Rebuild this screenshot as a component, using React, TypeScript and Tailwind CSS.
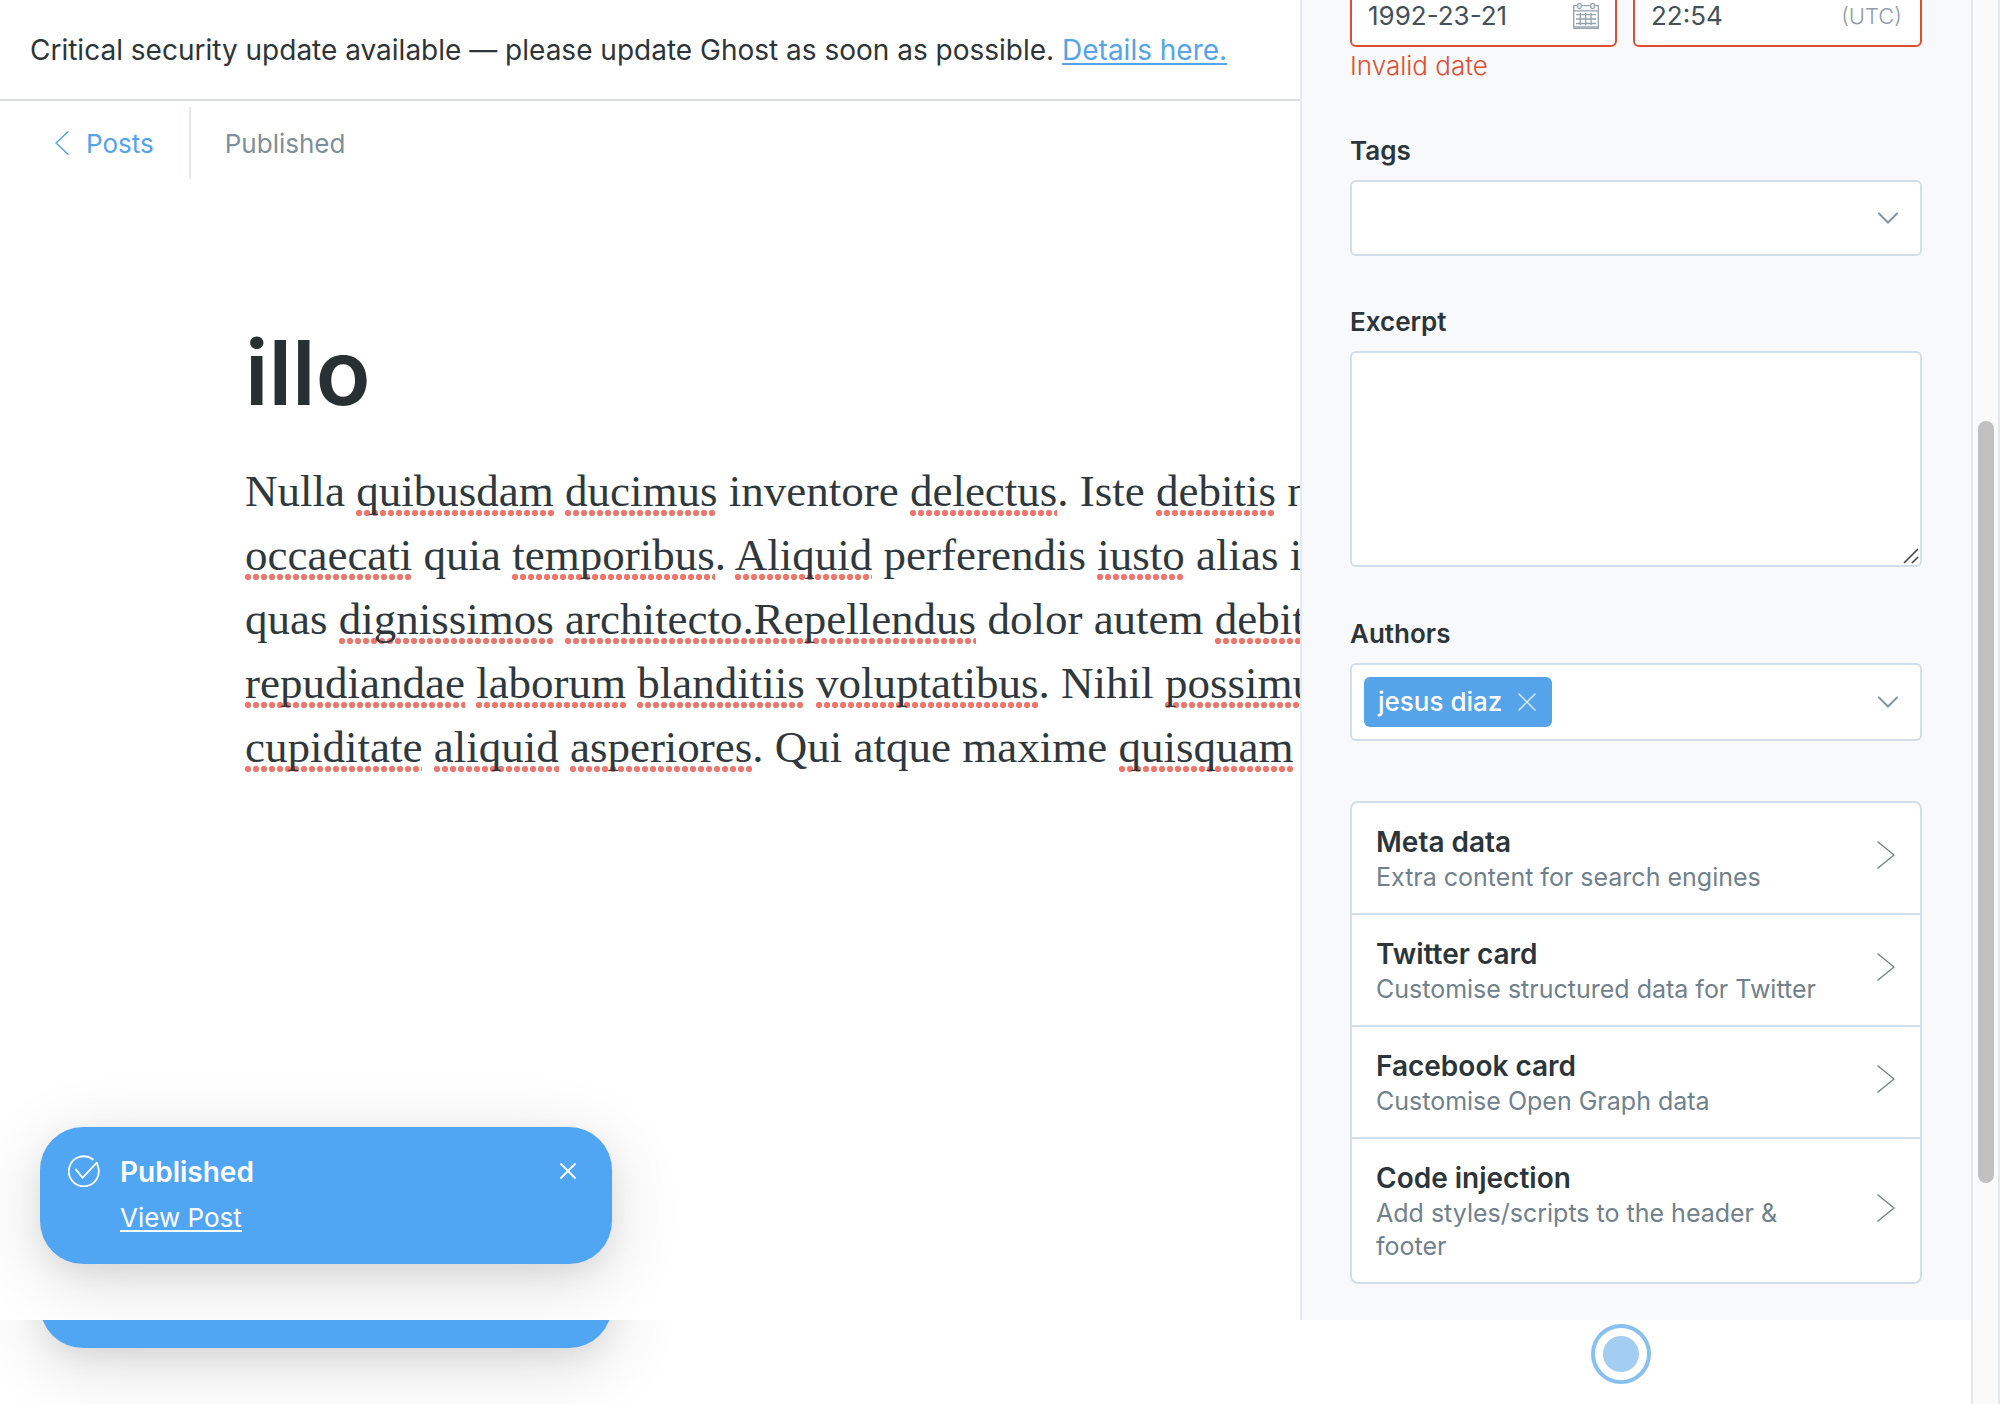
import type { ReactNode } from "react";

function Typo({ children }: { children: ReactNode }) {
  return (
    <span className="bg-[radial-gradient(circle_at_3px_3px,#f0756b_2.8px,transparent_3.4px)] bg-[length:8px_6px] bg-[position:left_bottom] bg-repeat-x">
      {children}
    </span>
  );
}

function ChevronDown() {
  return (
    <svg className="h-3 w-5" viewBox="0 0 20 12" fill="none" stroke="#8195a3" strokeWidth="2" strokeLinecap="round" aria-hidden="true">
      <path d="M1 1.500l9 9 9-9" />
    </svg>
  );
}

function CalendarIcon() {
  return (
    <svg className="h-[26px] w-[26px]" viewBox="0 0 26 26" fill="none" stroke="#93a4af" strokeWidth="1.3" aria-hidden="true">
      <path d="M4.5 2.6H.7v22.7h24.6V2.6h-3.8M8.3 2.6h9.4M.7 7.800h24.6M.7 23.8h24.6" />
      <rect x="4.7" y=".7" width="3.4" height="4.6" rx=".8" />
      <rect x="17.9" y=".7" width="3.4" height="4.6" rx=".8" />
      <path d="M3 11.700h20M3 16h20M3 20.500h20M7.3 10v12M12.700 10v12M18 10v12" />
    </svg>
  );
}

function Toast() {
  return (
    <div className="flex h-[137px] w-[572px] shrink-0 items-start rounded-[43px] bg-[#51a6f3] pt-[27px] pr-9 pl-7 text-white shadow-[0_16px_72px_rgba(0,0,0,0.14),0_10px_24px_rgba(0,0,0,0.06)]">
      <svg className="mt-px h-8 w-8" viewBox="0 0 32 32" fill="none" stroke="white" strokeWidth="1.8" strokeLinecap="round" strokeLinejoin="round" aria-hidden="true">
        <path d="M25 4.500A15 15 0 1 0 30 11.500L28.800 7.700L14.500 22.800L7.900 14.400" />
      </svg>
      <div className="ml-5 flex-1">
        <p className="text-[28px] leading-[36px] font-semibold">Published</p>
        <a href="#view-post" className="mt-2.5 block w-fit text-[26px] leading-[36px] underline decoration-2 underline-offset-3">
          View Post
        </a>
      </div>
      <button type="button" aria-label="Close notification" className="mt-[9px]">
        <svg className="h-4 w-4" viewBox="0 0 16 16" stroke="white" strokeWidth="1.8" strokeLinecap="round" aria-hidden="true">
          <path d="M1 1l14 14M15 1L1 15" />
        </svg>
      </button>
    </div>
  );
}

const cards = [
  { title: "Meta data", text: "Extra content for search engines" },
  { title: "Twitter card", text: "Customise structured data for Twitter" },
  { title: "Facebook card", text: "Customise Open Graph data" },
  { title: "Code injection", text: "Add styles/scripts to the header & footer" },
];

function Editor() {
  return (
    <main className="relative min-w-0 flex-1 overflow-hidden">
      <div className="flex h-[101px] items-center border-b-2 border-[#dadddd] pl-[30px] text-[28px] whitespace-nowrap">
        <p>
          Critical security update available — please update Ghost as soon as possible.{" "}
          <a href="#details" className="text-[#55a3e8] underline decoration-2 underline-offset-3">
            Details here.
          </a>
        </p>
      </div>
      <header className="mt-1.5 flex h-[72px] items-center text-[26px]">
        <a href="#posts" className="flex h-full items-center gap-4 border-r-2 border-[#e3eaf1] pr-[35px] pl-[54px] text-[#55a3e8]">
          <svg className="h-6 w-4" viewBox="0 0 16 24" fill="none" stroke="currentColor" strokeWidth="1.5" strokeLinecap="round" strokeLinejoin="round" aria-hidden="true">
            <path d="M14 .800L2 12l12 11.200" />
          </svg>
          Posts
        </a>
        <span className="pl-[34px] text-[#7d8f9b]">Published</span>
      </header>
      <article className="pt-[138px] pl-[245px] whitespace-nowrap">
        <h1 className="text-[90px] leading-[112px] font-semibold text-[#283033]">illo</h1>
        <div className="mt-[30px] font-['Liberation_Serif',serif] text-[45px] leading-[64px] text-[#2f383d]">
          <p>
            Nulla <Typo>quibusdam</Typo> <Typo>ducimus</Typo> inventore <Typo>delectus</Typo>. Iste <Typo>debitis</Typo> nam
          </p>
          <p>
            <Typo>occaecati</Typo> quia <Typo>temporibus</Typo>. <Typo>Aliquid</Typo> perferendis <Typo>iusto</Typo> alias ipsa
          </p>
          <p>
            quas <Typo>dignissimos</Typo> <Typo>architecto.Repellendus</Typo> dolor autem <Typo>debitis</Typo>
          </p>
          <p>
            <Typo>repudiandae</Typo> <Typo>laborum</Typo> <Typo>blanditiis</Typo> <Typo>voluptatibus</Typo>. Nihil <Typo>possimus</Typo>
          </p>
          <p>
            <Typo>cupiditate</Typo> <Typo>aliquid</Typo> <Typo>asperiores</Typo>. Qui atque maxime <Typo>quisquam</Typo>
          </p>
        </div>
      </article>
      <div className="absolute bottom-14 left-10">
        <Toast />
      </div>
    </main>
  );
}

function Settings() {
  return (
    <aside className="w-[671px] shrink-0 overflow-hidden border-l-2 border-[#e3eaf1] bg-[#f8f9fb] pr-[49px] pl-12 text-[26px] leading-[38px]">
      <div className="-mt-[31px] flex gap-4">
        <div className="flex h-[78px] w-[267px] items-center justify-between rounded-md border-2 border-[#dc4f33] bg-white px-4 pt-4">
          <input aria-label="Publish date" defaultValue="1992-23-21" className="w-[180px] text-[#465058] outline-none" />
          <CalendarIcon />
        </div>
        <div className="flex h-[78px] flex-1 items-center justify-between rounded-md border-2 border-[#dc4f33] bg-white pt-4 pr-[18px] pl-4">
          <input aria-label="Publish time" defaultValue="22:54" className="w-[120px] text-[#465058] outline-none" />
          <span className="text-[22px] font-light text-[#8e9da8]">(UTC)</span>
        </div>
      </div>
      <p className="leading-[37px] font-light text-[#dc4f33]">Invalid date</p>

      <label htmlFor="tags" className="mt-12 block font-semibold">
        Tags
      </label>
      <div className="relative mt-2.5">
        <select id="tags" className="block h-[76px] w-full appearance-none rounded-md border-2 border-[#d2dee7] bg-white px-4 outline-none">
          <option value=""></option>
        </select>
        <span className="pointer-events-none absolute inset-y-0 right-6 flex items-center">
          <ChevronDown />
        </span>
      </div>

      <label htmlFor="excerpt" className="mt-[47px] block font-semibold">
        Excerpt
      </label>
      <div className="relative mt-2.5">
        <textarea id="excerpt" className="block h-[216px] w-full resize-none rounded-md border-2 border-[#d2dee7] bg-white p-4 outline-none" />
        <svg className="pointer-events-none absolute right-[3px] bottom-[3px] h-4 w-4" viewBox="0 0 16 16" stroke="#444" strokeWidth="1.6" aria-hidden="true">
          <path d="M1 15L15 1M9 15l6-6" />
        </svg>
      </div>

      <label htmlFor="authors" className="mt-12 block font-semibold">
        Authors
      </label>
      <div className="mt-2.5 flex h-[78px] items-center rounded-md border-2 border-[#d2dee7] bg-white pr-[22px] pl-3">
        <span className="flex h-[50px] items-center gap-4 rounded-md bg-[#55a3e8] pr-4 pl-3.5 font-medium text-white">
          jesus diaz
          <button type="button" aria-label="Remove jesus diaz">
            <svg className="h-[18px] w-[18px]" viewBox="0 0 18 18" stroke="#d6e9fa" strokeWidth="1.5" strokeLinecap="round" aria-hidden="true">
              <path d="M1 1l16 16M17 1L1 17" />
            </svg>
          </button>
        </span>
        <input id="authors" className="min-w-0 flex-1 outline-none" />
        <button type="button" aria-label="Show authors">
          <ChevronDown />
        </button>
      </div>

      <ul className="mt-[60px] divide-y-2 divide-[#d2dee7] rounded-lg border-2 border-[#d2dee7] bg-white">
        {cards.map((card) => (
          <li key={card.title}>
            <button type="button" className="flex w-full items-center justify-between px-6 pt-[21px] pb-[19px] text-left">
              <span className="max-w-[450px]">
                <span className="block text-[28px] leading-[37px] font-semibold">{card.title}</span>
                <span className="block text-[25px] leading-[33px] text-[#6f818c]">{card.text}</span>
              </span>
              <svg className="mb-2 h-7 w-5" viewBox="0 0 20 28" fill="none" stroke="#76868f" strokeWidth="1.5" strokeLinecap="round" strokeLinejoin="round" aria-hidden="true">
                <path d="M2 1l16 13L2 27" />
              </svg>
            </button>
          </li>
        ))}
      </ul>
    </aside>
  );
}

export default function App() {
  return (
    <div className="relative flex h-screen overflow-hidden bg-white font-['Inter',sans-serif] text-[#2c3539]">
      <div className="flex min-w-0 flex-1 flex-col">
        <div className="flex min-h-0 flex-1">
          <Editor />
          <Settings />
        </div>
        <div className="flex h-[84px] shrink-0 items-end overflow-hidden pb-14 pl-10">
          <Toast />
        </div>
      </div>
      <div className="flex w-[29px] shrink-0 flex-col items-center border-r-2 border-l-2 border-[#e6e7e8] bg-[#fafafa]">
        <div className="mt-[421px] h-[762px] w-4 rounded-full bg-[#c0c0c0]" />
      </div>
      <div className="pointer-events-none absolute right-[349px] bottom-5 flex h-[60px] w-[60px] items-center justify-center rounded-full border-4 border-[#88c0ef] bg-white">
        <div className="h-9 w-9 rounded-full bg-[#a3cef2]" />
      </div>
    </div>
  );
}
